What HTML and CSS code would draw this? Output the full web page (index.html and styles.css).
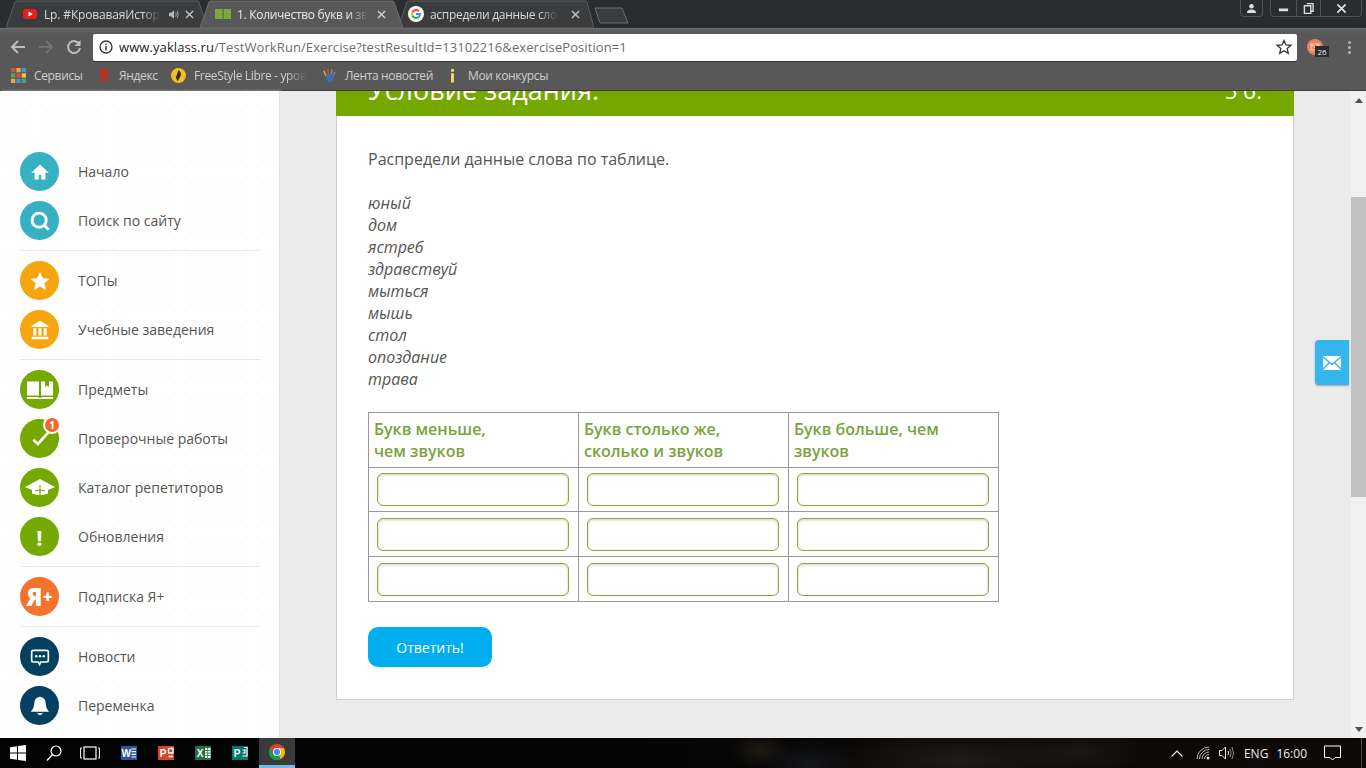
FILE: index.html
```html
<!DOCTYPE html>
<html lang="ru">
<head>
<meta charset="utf-8">
<title>YaKlass</title>
<link rel="stylesheet" href="styles.css">
</head>
<body>
<header class="chrome">
  <div class="tabstrip">
    <div class="tab tab-one">
      <svg class="tab-shape" viewBox="0 0 201 28" preserveAspectRatio="none"><path d="M0 28 L9 2 Q9.500 1 11 1 H191 Q192.500 1 193 2 L201 28 Z" class="shape-idle"/></svg>
      <svg class="fav" viewBox="0 0 16 16"><rect x="0" y="3" width="14" height="10" rx="3" fill="#e5201c"/><path d="M5.500 5.500 L9.800 8 L5.500 10.500 Z" fill="#fff"/></svg>
      <span class="tab-title tab-title-one">Lp. #КроваваяИстория</span>
      <svg class="tab-audio" viewBox="0 0 12 12"><path d="M0 4 H2.500 L6 1 V11 L2.500 8 H0 Z" fill="#b9b9b9"/><path d="M8 3.500 Q9.500 6 8 8.500 M10 2 Q12 6 10 10" stroke="#b9b9b9" fill="none"/></svg>
      <svg class="tab-x" viewBox="0 0 10 10"><path d="M1 1 L9 9 M9 1 L1 9" stroke="#c0c0c0" stroke-width="1.600"/></svg>
    </div>
    <div class="tab tab-two">
      <svg class="tab-shape" viewBox="0 0 203 28" preserveAspectRatio="none"><path d="M0 28 L9 2 Q9.500 1 11 1 H192 Q193.500 1 194 2 L203 28 Z" class="shape-active"/></svg>
      <svg class="fav" viewBox="0 0 16 16"><path d="M0 3 H7.500 V13 H0 Z M8.500 3 H16 V13 H8.500 Z" fill="#7fa83a"/></svg>
      <span class="tab-title tab-title-two">1. Количество букв и звуков</span>
      <svg class="tab-x" viewBox="0 0 10 10"><path d="M1 1 L9 9 M9 1 L1 9" stroke="#d0d0d0" stroke-width="1.600"/></svg>
    </div>
    <div class="tab tab-three">
      <svg class="tab-shape" viewBox="0 0 196 28" preserveAspectRatio="none"><path d="M0 28 L9 2 Q9.500 1 11 1 H187 Q188.500 1 189 2 L196 28 Z" class="shape-idle"/></svg>
      <svg class="fav" viewBox="0 0 16 16"><circle cx="8" cy="8" r="8" fill="#fff"/><path d="M8 3 A5 5 0 0 1 11.500 4.400 L10 5.900 A3 3 0 0 0 5.200 7 L3.500 5.700 A5 5 0 0 1 8 3" fill="#ea4335"/><path d="M3.500 5.700 L5.200 7 A3 3 0 0 0 5.200 9 L3.500 10.300 A5 5 0 0 1 3.500 5.700" fill="#fbbc05"/><path d="M3.500 10.300 L5.200 9 A3 3 0 0 0 10 10.200 L11.600 11.500 A5 5 0 0 1 3.500 10.300" fill="#34a853"/><path d="M13 7 H8 V9 H10.900 A3 3 0 0 1 10 10.200 L11.600 11.500 A5 5 0 0 0 13 7" fill="#4285f4"/></svg>
      <span class="tab-title tab-title-three">аспредели данные слова</span>
      <svg class="tab-x" viewBox="0 0 10 10"><path d="M1 1 L9 9 M9 1 L1 9" stroke="#c0c0c0" stroke-width="1.600"/></svg>
    </div>
    <svg class="new-tab" viewBox="0 0 35 17"><path d="M1 1 H28 L34 16 H6 Z" fill="#3a3c3e" stroke="#6e6e6e"/></svg>
    <div class="win-controls">
      <div class="win-box win-user">
        <svg viewBox="0 0 12 12" class="win-icon"><circle cx="6" cy="3.500" r="2.500" fill="#ddd"/><path d="M1 11 Q1 7 6 7 Q11 7 11 11 Z" fill="#ddd"/></svg>
      </div>
      <div class="win-box win-main">
        <div class="win-btn"><svg viewBox="0 0 12 12" class="win-icon"><rect x="1" y="6" width="10" height="3" fill="#ddd"/></svg></div>
        <div class="win-btn win-sep"><svg viewBox="0 0 12 12" class="win-icon"><path d="M4 0.500 H11 V9 H9 M1.500 3 H8.500 V11.500 H1.500 Z" stroke="#ddd" stroke-width="1.500" fill="none"/></svg></div>
        <div class="win-btn win-close"><svg viewBox="0 0 12 12" class="win-icon"><path d="M1.500 1.500 L10.500 10.500 M10.500 1.500 L1.500 10.500" stroke="#ddd" stroke-width="2"/></svg></div>
      </div>
    </div>
  </div>
  <div class="toolbar">
    <svg class="nav-btn nav-back" viewBox="0 0 16 16"><path d="M15 8 H2 M8 2 L2 8 L8 14" stroke="#bdbdbd" stroke-width="2" fill="none"/></svg>
    <svg class="nav-btn nav-forward" viewBox="0 0 16 16"><path d="M1 8 H14 M8 2 L14 8 L8 14" stroke="#737373" stroke-width="2" fill="none"/></svg>
    <svg class="nav-btn nav-reload" viewBox="0 0 16 16"><path d="M13.500 5.500 A6 6 0 1 0 14 9" stroke="#bdbdbd" stroke-width="2" fill="none"/><path d="M14.500 1 V7 H8.500 Z" fill="#bdbdbd"/></svg>
    <div class="omnibox">
      <svg class="info-icon" viewBox="0 0 14 14"><circle cx="7" cy="7" r="6" stroke="#333" stroke-width="1.300" fill="none"/><path d="M7 6 V10.500 M7 3.500 V5" stroke="#333" stroke-width="1.500"/></svg>
      <span class="url"><span class="url-host">www.yaklass.ru</span>/TestWorkRun/Exercise?testResultId=13102216&amp;exercisePosition=1</span>
      <svg class="star-icon" viewBox="0 0 16 16"><path d="M8 1.500 L10 6 L14.800 6.400 L11.200 9.600 L12.300 14.400 L8 11.800 L3.700 14.400 L4.800 9.600 L1.200 6.400 L6 6 Z" fill="none" stroke="#333" stroke-width="1.300"/></svg>
    </div>
    <div class="ext">
      <svg class="ext-icon" viewBox="0 0 16 16"><circle cx="8" cy="8" r="8" fill="#e8825f"/><rect x="4" y="5" width="8" height="6" fill="none" stroke="#fbd5c5"/><path d="M4 5 L8 8.500 L12 5" fill="none" stroke="#fbd5c5"/></svg>
      <span class="ext-badge">26</span>
    </div>
    <div class="menu-dots"><i></i><i></i><i></i></div>
  </div>
  <div class="bookmarks">
    <div class="bm bm-apps">
      <svg class="bm-icon" viewBox="0 0 14 14"><rect x="0" y="0" width="4" height="4" fill="#d9503f"/><rect x="5" y="0" width="4" height="4" fill="#e9a83a"/><rect x="10" y="0" width="4" height="4" fill="#4f8fe0"/><rect x="0" y="5" width="4" height="4" fill="#4fa85a"/><rect x="5" y="5" width="4" height="4" fill="#d9503f"/><rect x="10" y="5" width="4" height="4" fill="#e9c83a"/><rect x="0" y="10" width="4" height="4" fill="#e9a83a"/><rect x="5" y="10" width="4" height="4" fill="#4f8fe0"/><rect x="10" y="10" width="4" height="4" fill="#4fa85a"/></svg>
      <span>Сервисы</span>
    </div>
    <div class="bm bm-yandex">
      <svg class="bm-icon" viewBox="0 0 14 16"><path d="M7 1 H11 V15 H8.500 V10 H7.500 L5 15 H2.500 L5.300 9.500 Q3 8.500 3 5.500 Q3 1 7 1 Z" fill="#c8281e"/></svg>
      <span>Яндекс</span>
    </div>
    <div class="bm bm-free">
      <svg class="bm-icon" viewBox="0 0 16 16"><circle cx="8" cy="8" r="8" fill="#f2c01e"/><path d="M8 2 Q12 5 10 9 L7 14 Q4 9 6 8 Z" fill="#3b2a12"/></svg>
      <span class="bm-fade">FreeStyle Libre - уровень</span>
    </div>
    <div class="bm bm-lenta">
      <svg class="bm-icon" viewBox="0 0 16 16"><path d="M3 8 Q8 5 13 8 L11 15 H6 Z" fill="#3d6ea8"/><path d="M4 8 L2 3" stroke="#e0b23a" stroke-width="1.500"/><path d="M7 7 L6 1" stroke="#c0523a" stroke-width="1.500"/><path d="M10 7 L10.500 1" stroke="#6aa84f" stroke-width="1.500"/><path d="M12 8 L14 4" stroke="#8e6ec0" stroke-width="1.500"/></svg>
      <span>Лента новостей</span>
    </div>
    <div class="bm bm-contest">
      <svg class="bm-icon" viewBox="0 0 14 16"><rect x="5.500" y="1" width="3" height="3" fill="#f0e060"/><rect x="5.500" y="5.500" width="3" height="10" fill="#f0e060"/></svg>
      <span>Мои конкурсы</span>
    </div>
  </div>
</header>

<div class="viewport">
  <aside class="sidebar">
    <div class="nav-group">
      <a class="nav-item"><span class="disc disc-teal"><svg class="disc-svg" viewBox="0 0 24 24"><path d="M12 3 L1.500 13 H5.500 V21 H10.500 V15.500 H13.500 V21 H18.500 V13 H22.500 Z" fill="#fff"/></svg></span><span class="nav-label">Начало</span></a>
      <a class="nav-item"><span class="disc disc-teal"><svg class="disc-svg" viewBox="0 0 24 24"><circle cx="11" cy="11" r="8.500" fill="none" stroke="#fff" stroke-width="3.400"/><path d="M17.500 17.500 L22.500 22.500" stroke="#fff" stroke-width="3.400"/></svg></span><span class="nav-label">Поиск по сайту</span></a>
    </div>
    <div class="nav-group">
      <a class="nav-item"><span class="disc disc-amber"><svg class="disc-svg" viewBox="0 0 24 24"><path d="M12 1 L15.300 8.600 L23.500 9.400 L17.300 14.800 L19.100 23 L12 18.700 L4.900 23 L6.700 14.800 L0.500 9.400 L8.700 8.600 Z" fill="#fff"/></svg></span><span class="nav-label">ТОПы</span></a>
      <a class="nav-item"><span class="disc disc-amber"><svg class="disc-svg" viewBox="0 0 24 24"><path d="M12 1 L22 7 V8.500 H2 V7 Z M4 10 H7.500 V18.500 H4 Z M10.250 10 H13.750 V18.500 H10.250 Z M16.500 10 H20 V18.500 H16.500 Z M2 20 H22 V23 H2 Z" fill="#fff"/></svg></span><span class="nav-label">Учебные заведения</span></a>
    </div>
    <div class="nav-group">
      <a class="nav-item"><span class="disc disc-green"><svg class="disc-svg-book" viewBox="0 0 26 18"><path d="M0 0.500 H12 V14.500 H0 Z M14 0.500 H18 V6 L20 4.500 L22 6 V0.500 H26 V14.500 H14 Z M0 16 H10.500 L13 17 L15.500 16 H26 V18 H0 Z" fill="#fff"/></svg></span><span class="nav-label">Предметы</span></a>
      <a class="nav-item"><span class="disc disc-green"><svg class="disc-svg" viewBox="0 0 24 24"><path d="M4 13 L9.500 18 L22 4" fill="none" stroke="#fff" stroke-width="3.200"/></svg></span><span class="count-badge">1</span><span class="nav-label">Проверочные работы</span></a>
      <a class="nav-item"><span class="disc disc-green"><svg class="disc-svg-cap" viewBox="0 0 30 18"><path d="M15 0 L30 8 L23 11 V14.500 Q15 18 7 14.500 V11 L0 8 Z" fill="#fff"/><path d="M15 6 V17 M10 11.500 H20" stroke="#76a900" stroke-width="1.200" fill="none"/></svg></span><span class="nav-label">Каталог репетиторов</span></a>
      <a class="nav-item"><span class="disc disc-green disc-text disc-bang">!</span><span class="nav-label">Обновления</span></a>
    </div>
    <div class="nav-group">
      <a class="nav-item"><span class="disc disc-orange disc-text disc-ya">Я<sup class="disc-plus">+</sup></span><span class="nav-label">Подписка Я+</span></a>
    </div>
    <div class="nav-group">
      <a class="nav-item"><span class="disc disc-navy"><svg class="disc-svg" viewBox="0 0 24 24"><path d="M4 4 H20 Q22 4 22 6 V16 Q22 18 20 18 H13 L11.500 21 L10 18 H4 Q2 18 2 16 V6 Q2 4 4 4 Z" fill="none" stroke="#fff" stroke-width="2"/><circle cx="7.500" cy="11" r="1.500" fill="#fff"/><circle cx="12" cy="11" r="1.500" fill="#fff"/><circle cx="16.500" cy="11" r="1.500" fill="#fff"/></svg></span><span class="nav-label">Новости</span></a>
      <a class="nav-item"><span class="disc disc-navy"><svg class="disc-svg" viewBox="0 0 24 24"><path d="M12 1 Q19 2 19 10 Q19 15 23 19 H1 Q5 15 5 10 Q5 2 12 1 Z M8.500 20.500 H15.500 Q14.500 23 12 23 Q9.500 23 8.500 20.500 Z" fill="#fff"/></svg></span><span class="nav-label">Переменка</span></a>
    </div>
  </aside>

  <main class="main">
    <section class="card">
      <div class="card-head">
        <h2 class="card-title">Условие задания:</h2>
        <span class="card-score">5 б.</span>
      </div>
      <div class="card-body">
        <p class="task-line">Распредели данные слова по таблице.</p>
        <p class="word-list">юный<br>дом<br>ястреб<br>здравствуй<br>мыться<br>мышь<br>стол<br>опоздание<br>трава</p>
        <table class="answers">
          <thead>
            <tr><th>Букв меньше,<br>чем звуков</th><th>Букв столько же,<br>сколько и звуков</th><th>Букв больше, чем<br>звуков</th></tr>
          </thead>
          <tbody>
            <tr class="row-first"><td><input class="answer" type="text"></td><td><input class="answer" type="text"></td><td><input class="answer" type="text"></td></tr>
            <tr><td><input class="answer" type="text"></td><td><input class="answer" type="text"></td><td><input class="answer" type="text"></td></tr>
            <tr><td><input class="answer" type="text"></td><td><input class="answer" type="text"></td><td><input class="answer" type="text"></td></tr>
          </tbody>
        </table>
        <button class="submit" type="button">Ответить!</button>
      </div>
    </section>
    <div class="contact"><svg class="contact-icon" viewBox="0 0 18 14"><path d="M0 0 H18 L9 7.500 Z M0 1.800 L5.500 6.500 L0 12 Z M18 1.800 V12 L12.500 6.500 Z M6.500 7.500 L9 9.500 L11.500 7.500 L18 14 H0 Z" fill="#fff"/></svg></div>
  </main>

  <div class="scrollbar">
    <svg class="scroll-arrow" viewBox="0 0 8 5"><path d="M4 0 L8 5 H0 Z" fill="#505050"/></svg>
    <div class="scroll-thumb"></div>
    <svg class="scroll-arrow" viewBox="0 0 8 5"><path d="M0 0 H8 L4 5 Z" fill="#505050"/></svg>
  </div>
</div>

<footer class="taskbar">
  <div class="task-left">
    <svg class="tb-start" viewBox="0 0 16 16"><path d="M0 2.300 L7 1.300 V7.500 H0 Z M8 1.100 L16 0 V7.500 H8 Z M0 8.500 H7 V14.700 L0 13.700 Z M8 8.500 H16 V16 L8 14.900 Z" fill="#fff"/></svg>
    <svg class="tb-search" viewBox="0 0 16 16"><circle cx="10" cy="6" r="5" fill="none" stroke="#fff" stroke-width="1.200"/><path d="M6.500 9.500 L1 15.500" stroke="#fff" stroke-width="1.400"/></svg>
    <svg class="tb-view" viewBox="0 0 20 14"><rect x="4" y="1" width="12" height="12" fill="none" stroke="#fff" stroke-width="1.200"/><path d="M2 2 H0.600 V12 H2 M18 2 H19.400 V12 H18" fill="none" stroke="#fff"/></svg>
    <svg class="tb-app tb-word" viewBox="0 0 16 16"><rect x="0" y="1" width="16" height="14" fill="#2b579a"/><path d="M10.500 4 H15 M10.500 6.700 H15 M10.500 9.400 H15 M10.500 12 H15" stroke="#fff" stroke-width="1.200"/><text x="5.300" y="11.500" class="tb-letter">W</text></svg>
    <svg class="tb-app tb-ppt" viewBox="0 0 16 16"><rect x="0" y="1" width="16" height="14" fill="#d24726"/><path d="M10.500 3.500 H15 V8 H10.500 Z M10.500 11.500 H15" stroke="#fff" stroke-width="1.300" fill="none"/><text x="5" y="12" class="tb-letter">P</text></svg>
    <svg class="tb-app tb-xls" viewBox="0 0 16 16"><rect x="0" y="1" width="16" height="14" fill="#217346"/><path d="M10 3 H15.500 V13 H10 Z" fill="#fff"/><path d="M10 5.500 H15.500 M10 8 H15.500 M10 10.500 H15.500 M12.700 3 V13" stroke="#217346" stroke-width="0.800"/><text x="5" y="12" class="tb-letter">X</text></svg>
    <svg class="tb-app tb-pub" viewBox="0 0 16 16"><rect x="0" y="1" width="16" height="14" fill="#077568"/><path d="M10.500 5 H13 V8 H10.500 M10.500 11 H15 V2.500 H12" stroke="#fff" stroke-width="1.200" fill="none"/><text x="5" y="12" class="tb-letter">P</text></svg>
    <div class="tb-chrome">
      <svg class="tb-chrome-icon" viewBox="0 0 16 16"><circle cx="8" cy="8" r="8" fill="#db4437"/><path d="M8 8 L14.900 12 A8 8 0 0 1 4 14.900 Z" fill="#0f9d58"/><path d="M8 4 H15 A8 8 0 0 1 11.500 15.200 Z" fill="#f4b400"/><path d="M1 4 L4.500 10 L8 16 A8 8 0 0 1 1 4 Z" fill="#0f9d58"/><circle cx="8" cy="8" r="4" fill="#fff"/><circle cx="8" cy="8" r="3" fill="#4285f4"/></svg>
    </div>
  </div>
  <div class="task-right">
    <svg class="tray-caret" viewBox="0 0 12 7"><path d="M0.500 6.500 L6 1 L11.500 6.500" fill="none" stroke="#eee" stroke-width="1.200"/></svg>
    <svg class="tray-wifi" viewBox="0 0 14 14"><path d="M1 13 A12 12 0 0 1 13 1 M3.500 13 A9.500 9.500 0 0 1 13 3.500 M6 13 A7 7 0 0 1 13 6 M8.500 13 A4.500 4.500 0 0 1 13 8.500" fill="none" stroke="#ddd" stroke-width="0.800"/><circle cx="12" cy="12" r="1.500" fill="#eee"/></svg>
    <svg class="tray-sound" viewBox="0 0 16 14"><path d="M0.500 4.500 H3 L6.500 1 V13 L3 9.500 H0.500 Z" fill="none" stroke="#eee"/><path d="M9 5 Q10 7 9 9" fill="none" stroke="#eee"/><path d="M11 3 Q13 7 11 11 M13 1 Q16 7 13 13" fill="none" stroke="#888"/></svg>
    <span class="tray-text tray-lang">ENG</span>
    <span class="tray-text tray-time">16:00</span>
    <svg class="tray-action" viewBox="0 0 17 16"><path d="M0.500 1 H16.500 V12.500 H11 L8.500 15 L6 12.500 H0.500 Z" fill="none" stroke="#fff"/></svg>
    <div class="show-desktop"></div>
  </div>
</footer>
</body>
</html>
```
FILE: styles.css
```css
* { box-sizing: border-box; }
html, body { margin: 0; height: 100%; }
body {
  width: 1366px;
  height: 768px;
  display: flex;
  flex-direction: column;
  overflow: hidden;
  font-family: "Open Sans", "Liberation Sans", sans-serif;
  color: #555;
  background: #ebebeb;
}

/* Browser chrome */
.chrome { flex: none; height: 91px; background: #585858; border-bottom: 1px solid #3d3d3d; }
.tabstrip { height: 28px; background: #2a2d30; display: flex; padding-left: 6px; position: relative; }
.tab { position: relative; height: 28px; display: flex; align-items: center; flex: none; font-size: 12px; color: #d8d8d8; }
.tab-one { width: 201px; padding-left: 17px; }
.tab-two { width: 203px; margin-left: -7px; padding-left: 15px; z-index: 1; color: #e8e8e8; }
.tab-three { width: 196px; margin-left: -5px; padding-left: 10px; }
.tab-shape { position: absolute; left: 0; top: 0; width: 100%; height: 100%; }
.shape-idle { fill: #3a3c3e; stroke: #5e5e5e; stroke-width: 1; }
.shape-active { fill: #585858; stroke: #6e6e6e; stroke-width: 1; }
.fav { position: relative; width: 16px; height: 16px; flex: none; }
.tab-title { position: relative; margin-left: 5px; overflow: hidden; white-space: nowrap; letter-spacing: -0.3px; -webkit-mask-image: linear-gradient(90deg, #000 85%, transparent); mask-image: linear-gradient(90deg, #000 85%, transparent); }
.tab-title-one { width: 116px; letter-spacing: -0.15px; }
.tab-title-two { width: 131px; margin-left: 6px; }
.tab-title-three { width: 128px; margin-left: 6px; }
.tab-audio { position: relative; width: 10px; height: 11px; margin-left: 9px; flex: none; }
.tab-x { position: relative; width: 9px; height: 9px; flex: none; margin-left: 6px; }
.tab-two .tab-x { margin-left: 9px; }
.tab-three .tab-x { margin-left: 13px; }
.new-tab { width: 35px; height: 17px; margin-top: 7px; flex: none; }
.win-controls { margin-left: auto; display: flex; align-items: flex-start; gap: 7px; padding-right: 4px; }
.win-box { height: 17px; border: 1px solid #505356; border-top: 0; border-radius: 0 0 4px 4px; display: flex; }
.win-user { width: 23px; align-items: center; justify-content: center; }
.win-main { width: 92px; }
.win-btn { width: 25px; display: flex; align-items: center; justify-content: center; }
.win-sep { border-left: 1px solid #505356; border-right: 1px solid #505356; }
.win-close { flex: 1; }
.win-icon { width: 11px; height: 11px; }

.toolbar { height: 34px; display: flex; align-items: center; border-top: 1px solid #6b6b6b; background: linear-gradient(#626262, #585858 5px); padding: 3px 0 0 10px; }
.nav-btn { width: 16px; height: 16px; flex: none; }
.nav-forward { margin-left: 12px; }
.nav-reload { margin-left: 12px; }
.omnibox { margin-left: 11px; width: 1204px; height: 27px; background: #fff; border-radius: 2px; display: flex; align-items: center; padding: 0 5px 0 6px; box-shadow: 0 1px 0 #3a3a3a; }
.info-icon { width: 14px; height: 14px; flex: none; }
.url { margin-left: 6px; font-size: 13px; color: #6d6d6d; white-space: nowrap; letter-spacing: 0.085px; }
.url-host { color: #222; }
.star-icon { width: 16px; height: 16px; margin-left: auto; }
.ext { position: relative; width: 16px; height: 16px; margin-left: 10px; flex: none; }
.ext-icon { width: 16px; height: 16px; display: block; }
.ext-badge { position: absolute; left: 8px; top: 7px; width: 14px; height: 11px; background: #2a2d30; color: #eee; font-size: 8px; line-height: 11px; text-align: center; }
.menu-dots { margin-left: 25px; display: flex; flex-direction: column; gap: 2px; }
.menu-dots i { display: block; width: 3px; height: 3px; border-radius: 50%; background: #b5b5b5; }

.bookmarks { height: 27px; display: flex; align-items: center; padding-left: 11px; font-size: 12px; letter-spacing: -0.35px; color: #cfcfcf; }
.bm { display: flex; align-items: center; flex: none; white-space: nowrap; }
.bm-icon { width: 15px; height: 15px; flex: none; margin-right: 8px; }
.bm-apps { width: 85px; }
.bm-yandex { width: 75px; }
.bm-free { width: 151px; }
.bm-lenta { width: 123px; }
.bm-contest { width: 110px; }
.bm-fade { width: 113px; overflow: hidden; -webkit-mask-image: linear-gradient(90deg, #000 82%, transparent); mask-image: linear-gradient(90deg, #000 82%, transparent); }

/* Page viewport */
.viewport { flex: 1; min-height: 0; display: flex; }
.sidebar { flex: none; width: 280px; padding: 51px 19px 0 20px; background-color: #fff; background-image: radial-gradient(#ececec 0.6px, transparent 0.8px); background-size: 9px 9px; border-right: 1px solid #e2e2e2; box-shadow: 1px 0 2px #e2e2e2; overflow: hidden; }
.nav-group { display: flex; flex-direction: column; gap: 10px; padding: 10px 0; border-bottom: 1px solid #e8e8e8; }
.nav-group:last-child { border-bottom: 0; }
.nav-item { position: relative; display: flex; align-items: center; height: 39px; font-size: 14px; color: #555; }
.nav-label { margin-left: 19px; }
.disc { width: 39px; height: 39px; border-radius: 50%; flex: none; display: flex; align-items: center; justify-content: center; }
.disc-teal { background: #38b0c4; }
.disc-amber { background: #f5a60e; }
.disc-green { background: #76a900; }
.disc-orange { background: #f4722b; }
.disc-navy { background: #04405f; }
.disc-svg { width: 20px; height: 20px; }
.disc-svg-book { width: 26px; height: 18px; }
.disc-svg-cap { width: 30px; height: 18px; }
.disc-text { color: #fff; font-weight: 700; }
.disc-bang { font-size: 22px; line-height: 1; }
.disc-ya { font-size: 24px; line-height: 1; font-weight: 800; }
.disc-plus { font-size: 17px; line-height: 0; vertical-align: 6px; font-weight: 800; }
.count-badge { position: absolute; left: 23px; top: -3px; width: 18px; height: 18px; border-radius: 50%; background: #ef6a2b; border: 2px solid #fff; color: #fff; font-size: 10px; font-weight: 700; line-height: 14px; text-align: center; }

.main { position: relative; flex: none; width: 1071px; padding: 0 57px 0 56px; overflow: hidden; background: #ebebeb; }
.card { width: 958px; background: #fff; border: 1px solid #cfcfcf; border-top: 0; }
.card-head { height: 25px; margin: 0 -1px; padding: 0 32px; background: #76a900; color: #fff; display: flex; justify-content: space-between; align-items: flex-end; overflow: hidden; }
.card-title { margin: 0 0 8px; font-size: 27px; font-weight: 400; line-height: 36px; white-space: nowrap; flex: none; }
.card-score { font-size: 22px; line-height: 30px; margin-bottom: 11px; flex: none; }
.card-body { padding: 32px 31px 32px; }
.task-line { margin: 0 0 22px; font-size: 16px; line-height: 22px; color: #555; }
.word-list { margin: 0 0 22px; font-size: 16px; line-height: 22px; font-style: italic; color: #555; }
.answers { width: 631px; border-collapse: collapse; table-layout: fixed; border: 1px solid #999; }
.answers th { border: 1px solid #999; padding: 5px; text-align: left; font-size: 16px; line-height: 22px; font-weight: 600; color: #7ba23b; }
.answers td { border: 1px solid #999; padding: 0; }
.answer { display: block; width: 192px; height: 33px; margin: 6px 9px 5px 8px; padding: 0 6px; border: 1px solid #8aa83c; border-radius: 6px; background: #fff; box-shadow: inset 0 1px 3px rgba(0,0,0,0.2); outline: 0; }
.row-first .answer { margin-top: 5px; }
.submit { display: block; margin-top: 25px; width: 124px; height: 40px; border: 0; border-radius: 10px; background: #00aeef; color: #fff; font: 14px "Open Sans", "Liberation Sans", sans-serif; }
.contact { position: absolute; left: 1035px; top: 249px; width: 34px; height: 45px; background: #36b5ea; border-radius: 4px 0 0 4px; box-shadow: 0 1px 2px rgba(0,0,0,0.3); display: flex; align-items: center; justify-content: center; }
.contact-icon { width: 18px; height: 14px; }

.scrollbar { flex: none; width: 15px; background: #f1f1f1; display: flex; flex-direction: column; align-items: center; }
.scroll-arrow { flex: none; width: 8px; height: 5px; margin: 7px 0 6px; }
.scroll-thumb { flex: none; width: 100%; height: 300px; margin: 88px 0 auto; background: #c1c1c1; }

/* Windows taskbar */
.taskbar {
  flex: none;
  height: 30px;
  display: flex;
  justify-content: space-between;
  color: #fff;
  background:
    radial-gradient(ellipse 130px 34px at 960px 22px, #221a15, transparent),
    radial-gradient(ellipse 70px 26px at 1080px 14px, #1c1612, transparent),
    radial-gradient(ellipse 30px 18px at 760px 12px, #1e1a14, transparent),
    radial-gradient(ellipse 50px 24px at 810px 26px, #14161a, transparent),
    linear-gradient(90deg, #030303 0%, #050505 45%, #0a0807 70%, #0d0a08 100%);
}
.task-left { display: flex; align-items: center; padding-left: 10px; }
.tb-start { width: 16px; height: 16px; flex: none; }
.tb-search { width: 16px; height: 16px; margin-left: 20px; flex: none; }
.tb-view { width: 20px; height: 14px; margin-left: 18px; flex: none; }
.tb-app { width: 16px; height: 16px; margin-left: 21px; flex: none; }
.tb-letter { font-family: "Liberation Sans", sans-serif; font-size: 10px; font-weight: 700; fill: #fff; text-anchor: middle; }
.tb-chrome { margin-left: 11px; width: 36px; height: 30px; background: #3a3a3a; border-bottom: 3px solid #76b9ed; display: flex; align-items: center; justify-content: center; flex: none; }
.tb-chrome-icon { width: 16px; height: 16px; }
.task-right { display: flex; align-items: center; }
.tray-caret { width: 12px; height: 7px; }
.tray-wifi { width: 14px; height: 14px; margin-left: 13px; }
.tray-sound { width: 16px; height: 14px; margin-left: 9px; }
.tray-text { font-size: 12px; color: #eee; }
.tray-lang { margin-left: 9px; }
.tray-time { margin-left: 8px; }
.tray-action { width: 17px; height: 16px; margin-left: 17px; }
.show-desktop { width: 5px; height: 100%; margin-left: 20px; border-left: 1px solid #4a4a4a; }
```
